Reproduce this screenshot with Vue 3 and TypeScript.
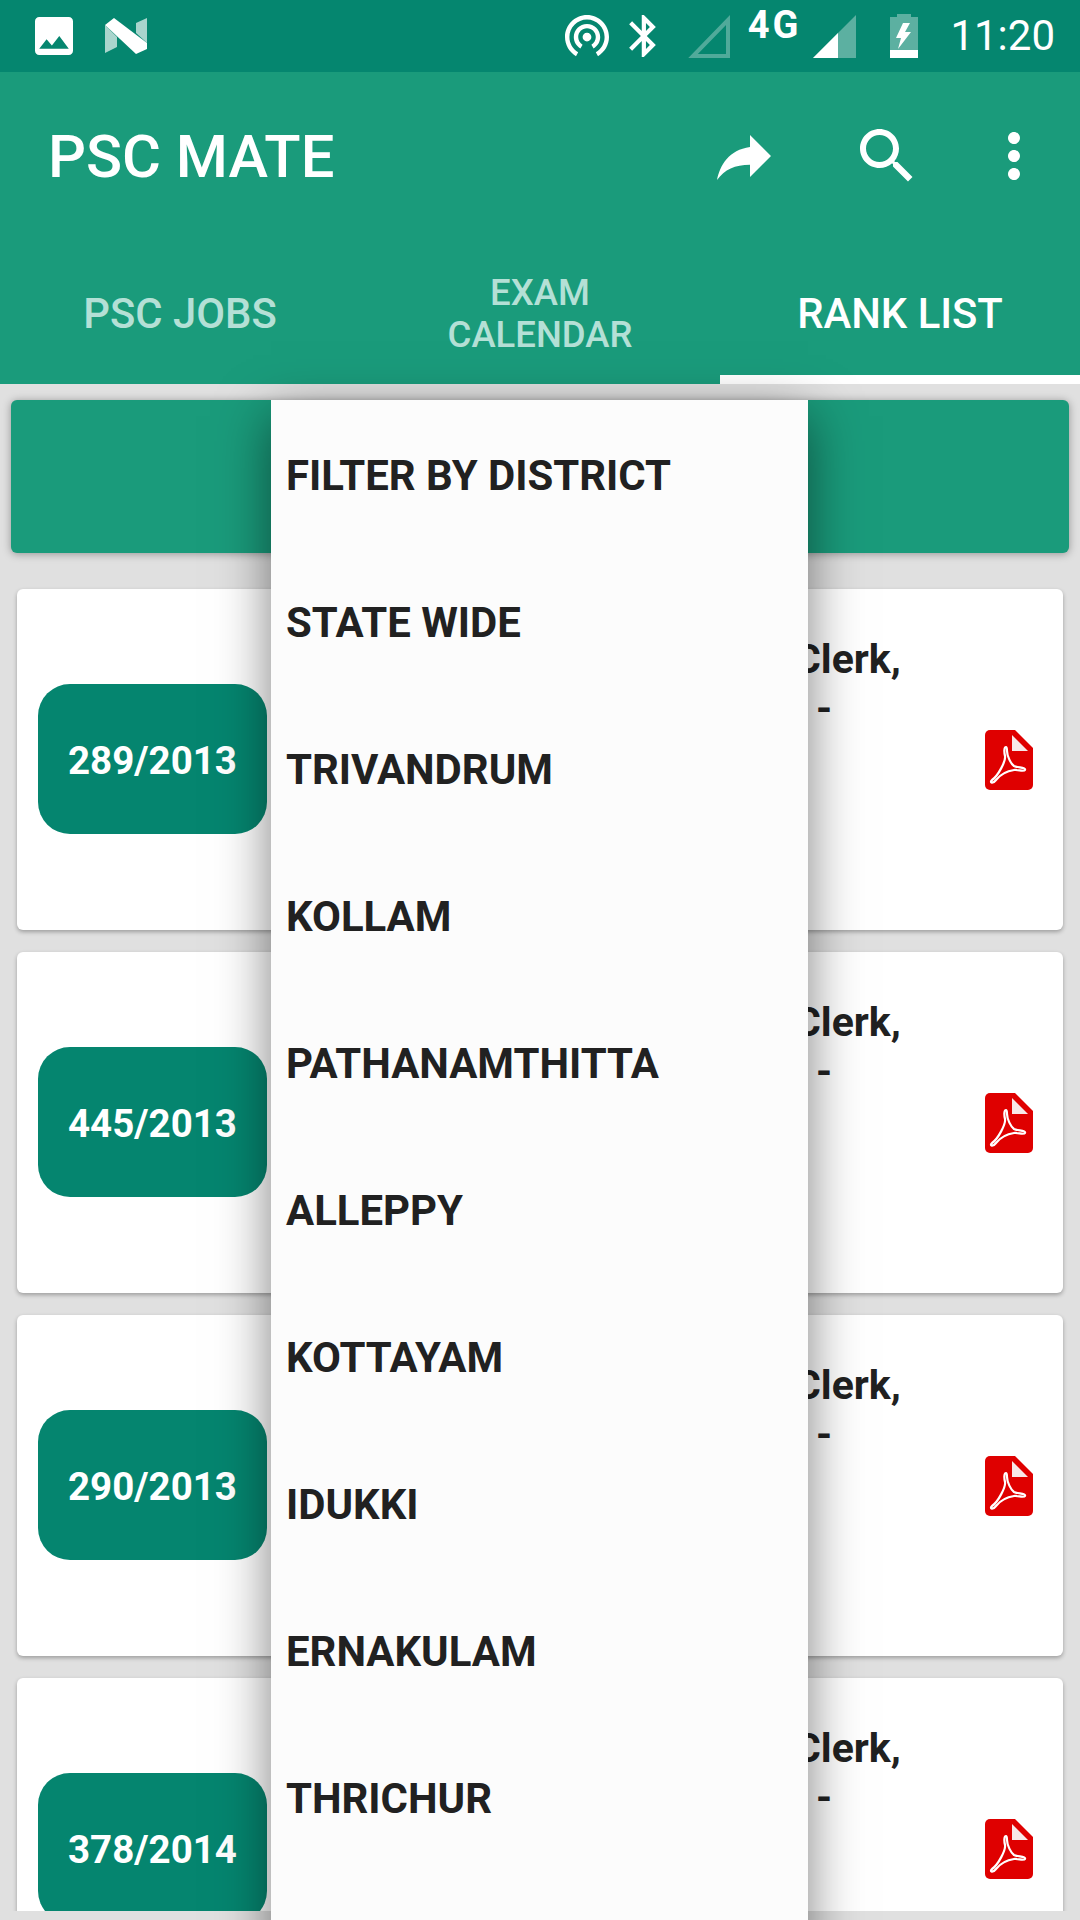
<script setup lang="ts">
const tabs = [
  { id: 'jobs', label: ['PSC JOBS'] },
  { id: 'exam', label: ['EXAM', 'CALENDAR'] },
  { id: 'rank', label: ['RANK LIST'] },
];

const ranks = ['289/2013', '445/2013', '290/2013', '378/2014'];

const districts = [
  'FILTER BY DISTRICT',
  'STATE WIDE',
  'TRIVANDRUM',
  'KOLLAM',
  'PATHANAMTHITTA',
  'ALLEPPY',
  'KOTTAYAM',
  'IDUKKI',
  'ERNAKULAM',
  'THRICHUR',
];
</script>

<template>
  <div class="screen">
    <header class="head">
      <div class="status">
        <svg class="st-photo" viewBox="3 3 18 18"><path fill="#fff" d="M21 19V5c0-1.1-.9-2-2-2H5c-1.1 0-2 .9-2 2v14c0 1.1.9 2 2 2h14c1.1 0 2-.9 2-2zM8.5 13.5l2.5 3.01L14.5 12l4.5 6H5l3.5-4.5z" /></svg>
        <svg class="st-n" viewBox="0 0 42 37">
          <polygon fill="#a9d5cd" points="0,7 12,19 12,29 0,35" />
          <polygon fill="#a9d5cd" points="31,5 42,0 42,25 31,15" />
          <polygon fill="#fff" points="0,7 9,0 42,25 42,31 31,36" />
        </svg>
        <span class="spacer"></span>
        <svg class="st-hotspot" viewBox="2 3 20 19"><path fill="#fff" d="M12 11c-1.1 0-2 .9-2 2s.9 2 2 2 2-.9 2-2-.9-2-2-2zm6 2c0-3.31-2.69-6-6-6s-6 2.69-6 6c0 2.22 1.21 4.15 3 5.19l1-1.74c-1.19-.7-2-1.97-2-3.45 0-2.21 1.79-4 4-4s4 1.79 4 4c0 1.48-.81 2.75-2 3.45l1 1.74c1.79-1.04 3-2.97 3-5.19zM12 3C6.48 3 2 7.48 2 13c0 3.7 2.01 6.92 4.99 8.65l1-1.73c-2.38-1.39-3.99-3.96-3.99-6.92 0-4.42 3.58-8 8-8s8 3.58 8 8c0 2.96-1.61 5.53-4 6.92l1 1.73c2.99-1.73 5-4.95 5-8.65 0-5.52-4.48-10-10-10z" /></svg>
        <svg class="st-bt" viewBox="5 2 12.71 20"><path fill="#fff" d="M17.71 7.71L12 2h-1v7.59L6.41 5 5 6.41 10.59 12 5 17.59 6.41 19 11 14.41V22h1l5.71-5.71-4.3-4.29 4.3-4.29zM13 5.83l1.88 1.88L13 9.59V5.83zm1.88 10.46L13 18.17v-3.76l1.88 1.88z" /></svg>
        <svg class="st-sig1" viewBox="0 0 42 43"><path fill="none" stroke="#fff" stroke-opacity=".3" stroke-width="4" d="M40 5 V41 H5 Z" /></svg>
        <span class="st-4g">4G</span>
        <svg class="st-sig2" viewBox="0 0 43 43">
          <polygon fill="#fff" fill-opacity=".35" points="43,0 43,43 0,43" />
          <polygon fill="#fff" points="25,18 25,43 0,43" />
        </svg>
        <svg class="st-batt" viewBox="0 0 28 44">
          <path fill="#fff" fill-opacity=".35" d="M7 0 H21 V3 H28 V44 H0 V3 H7 Z" />
          <rect fill="#fff" y="36" width="28" height="8" />
          <polygon fill="#fff" points="13,9 6,24 11,24 8,35 21,18 15,18 20,9" />
        </svg>
        <span class="st-time">11:20</span>
      </div>

      <div class="toolbar">
        <h1 class="title">PSC MATE</h1>
        <svg class="act act-share" viewBox="0 0 24 24"><path fill="#fff" d="M14 9V5l7 7-7 7v-4.1c-5 0-8.5 1.6-11 5.1 1-5 4-10 11-11z" /></svg>
        <svg class="act act-search" viewBox="0 0 24 24"><path fill="#fff" d="M15.5 14h-.79l-.28-.27C15.41 12.59 16 11.11 16 9.5 16 5.91 13.09 3 9.5 3S3 5.91 3 9.5 5.91 16 9.5 16c1.61 0 3.09-.59 4.23-1.57l.27.28v.79l5 4.99L20.49 19l-4.99-5zm-6 0C7.01 14 5 11.99 5 9.5S7.01 5 9.5 5 14 7.01 14 9.5 11.99 14 9.5 14z" /></svg>
        <svg class="act act-more" viewBox="0 0 24 24"><path fill="#fff" d="M12 8c1.1 0 2-.9 2-2s-.9-2-2-2-2 .9-2 2 .9 2 2 2zm0 2c-1.1 0-2 .9-2 2s.9 2 2 2 2-.9 2-2-.9-2-2-2zm0 6c-1.1 0-2 .9-2 2s.9 2 2 2 2-.9 2-2-.9-2-2-2z" /></svg>
      </div>

      <nav class="tabs">
        <div
          v-for="tab in tabs"
          :key="tab.id"
          class="tab"
          :class="{ active: tab.id === 'rank', small: tab.label.length > 1 }"
        >
          <span v-for="line in tab.label" :key="line">{{ line }}</span>
        </div>
      </nav>
    </header>

    <main class="content">
      <div class="filter-bar"></div>
      <article v-for="rank in ranks" :key="rank" class="card">
        <div class="badge">{{ rank }}</div>
        <div class="info">
          <p>Clerk,</p>
          <p class="dash">-</p>
        </div>
        <svg class="pdf" viewBox="0 0 48 60">
          <path fill="#df0000" d="M5 0 H30 L48 18 V55 a5 5 0 0 1 -5 5 H5 a5 5 0 0 1 -5 -5 V5 a5 5 0 0 1 5 -5 Z" />
          <polygon fill="#f8e8e8" points="27,5 43,21 27,21" />
          <path fill="none" stroke="#fff" stroke-width="2.2" d="M21 17 C19 17 19 22 20 26 C21 31 13 46 7 50 C4 53 8 54 11 50 C15 45 22 41 29 40 C33 39.5 39 42 40 40 C41 37 33 38 29 36 C26 34 22 26 22 21 C22 19 22 17 21 17 Z" />
        </svg>
      </article>
    </main>

    <ul class="menu">
      <li v-for="d in districts" :key="d">{{ d }}</li>
    </ul>
  </div>
</template>

<style scoped>
.screen {
  position: relative;
  width: 1080px;
  height: 1920px;
  overflow: hidden;
  background: #e0e0e0;
  font-family: Roboto, "Liberation Sans", sans-serif;
  color: #212121;
}

.head {
  background: #1a9b7b;
  height: 384px;
}

.status {
  display: flex;
  align-items: center;
  height: 72px;
  padding: 0 25px 0 35px;
  background: #05866f;
  color: #fff;
}

.spacer {
  flex: 1;
}

.st-photo { width: 38px; height: 38px; }
.st-n { width: 42px; height: 37px; margin-left: 32px; }
.st-hotspot { width: 44px; height: 42px; }
.st-bt { width: 27px; height: 42px; margin-left: 20px; }
.st-sig1 { width: 42px; height: 43px; margin-left: 32px; }
.st-4g {
  margin: -22px 0 0 18px;
  font-size: 38px;
  font-weight: 700;
  line-height: 34px;
  letter-spacing: 3px;
}
.st-sig2 { width: 43px; height: 43px; margin-left: 12px; }
.st-batt { width: 28px; height: 44px; margin-left: 34px; }
.st-time {
  margin-left: 32px;
  font-size: 42px;
  line-height: 48px;
}

.toolbar {
  display: flex;
  align-items: center;
  height: 168px;
  padding-left: 48px;
}

.title {
  flex: 1;
  margin: 2px 0 0;
  font-size: 59.6px;
  font-weight: 500;
  color: #fff;
}

.act { width: 72px; height: 72px; }
.act-search { margin-left: 71px; }
.act-more { margin: 0 30px 0 55px; }

.tabs {
  display: flex;
  height: 144px;
}

.tab {
  position: relative;
  flex: 1;
  display: flex;
  flex-direction: column;
  align-items: center;
  justify-content: center;
  padding-top: 3px;
  font-size: 41.8px;
  font-weight: 500;
  color: #b4e0d6;
}

.tab.small {
  font-size: 36.5px;
  line-height: 42px;
}

.tab.active {
  color: #fff;
}

.tab.active::after {
  content: "";
  position: absolute;
  left: 0;
  right: 0;
  bottom: 0;
  height: 9px;
  background: #fff;
}

.content {
  height: 1527px;
  overflow: hidden;
  padding: 16px 11px 0;
  box-sizing: border-box;
}

.filter-bar {
  height: 153px;
  margin-bottom: 36px;
  border-radius: 6px;
  background: #1a9b7b;
  box-shadow: 0 1px 8px rgba(0, 0, 0, 0.35);
}

.card {
  display: flex;
  align-items: center;
  height: 341px;
  margin: 0 6px 22px;
  border-radius: 6px;
  background: #fff;
  box-shadow: 0 2px 4px rgba(0, 0, 0, 0.3);
}

.badge {
  flex: none;
  display: flex;
  align-items: center;
  justify-content: center;
  width: 229px;
  height: 150px;
  margin: -2px 0 0 21px;
  padding-top: 3px;
  box-sizing: border-box;
  border-radius: 32px;
  background: #05856f;
  color: #fff;
  font-size: 38.5px;
  font-weight: 700;
}

.info {
  align-self: flex-start;
  margin: 46px 0 0 527px;
  font-size: 41px;
  font-weight: 700;
  line-height: 49px;
}

.info p {
  margin: 0;
}

.info .dash {
  padding-left: 22px;
}

.pdf {
  flex: none;
  width: 48px;
  height: 60px;
  margin: 0 30px 0 auto;
}

.menu {
  position: absolute;
  top: 400px;
  left: 271px;
  width: 537px;
  height: 1560px;
  margin: 0;
  padding: 0;
  list-style: none;
  background: #fcfcfc;
  box-shadow: 0 16px 50px rgba(0, 0, 0, 0.5);
}

.menu li {
  display: flex;
  align-items: center;
  box-sizing: border-box;
  height: 147px;
  padding: 4px 0 0 15px;
  font-size: 41.9px;
  font-weight: 700;
}
</style>
